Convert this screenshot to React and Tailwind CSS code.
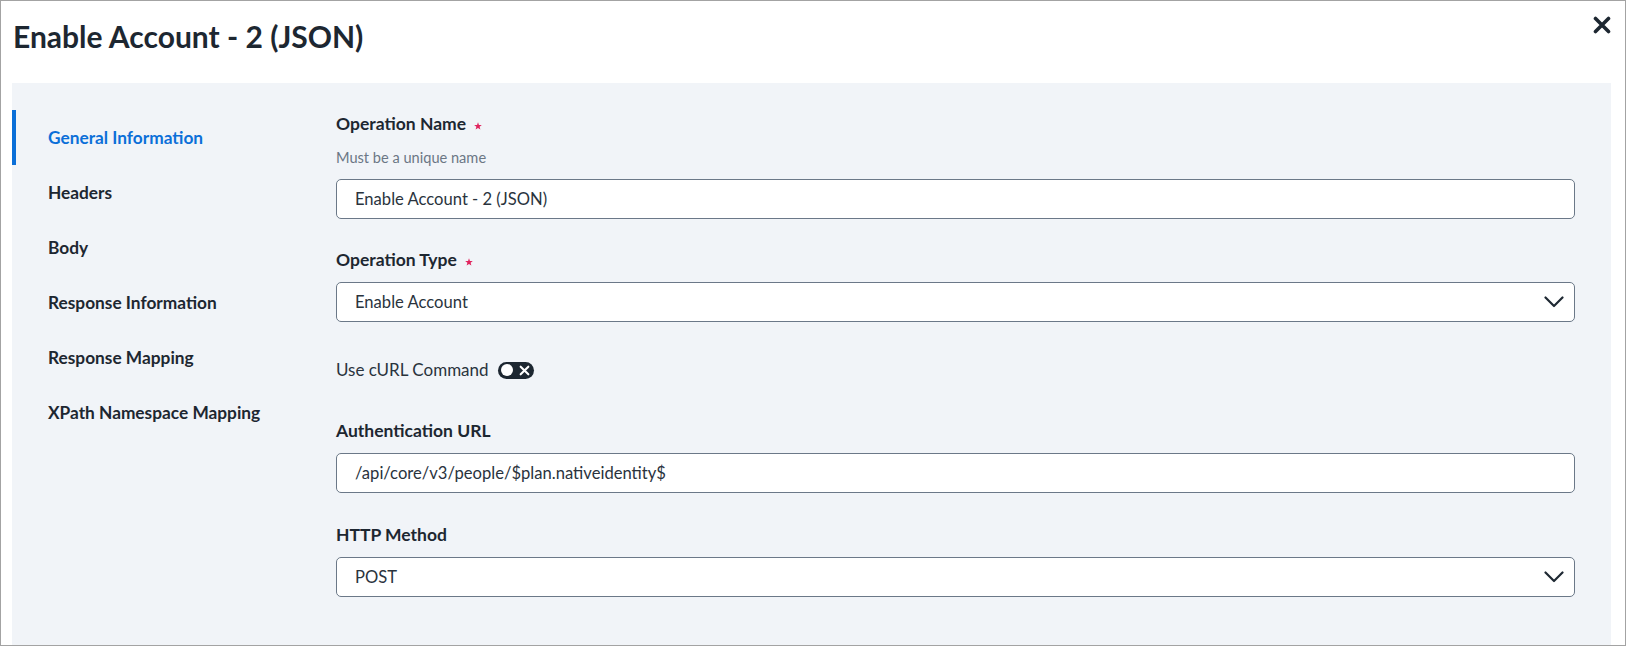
import React from 'react';

const FONT = { fontFamily: 'Lato, "Noto Sans", sans-serif' };

const navItems = [
  'General Information',
  'Headers',
  'Body',
  'Response Information',
  'Response Mapping',
  'XPath Namespace Mapping',
];

function Chevron() {
  return (
    <svg width="20" height="12" viewBox="0 0 20 12" fill="none">
      <polyline points="1.5,1.5 10,10 18.5,1.5" stroke="#1f2933" strokeWidth="2.2" strokeLinecap="round" strokeLinejoin="round" />
    </svg>
  );
}

function Star() {
  return (
    <svg width="8" height="8" viewBox="0 0 10 10" className="ml-[8px] mt-[3px]">
      <polygon points="5,0.3 6.2,3.6 9.8,3.7 7,5.9 8,9.5 5,7.4 2,9.5 3,5.9 0.2,3.7 3.8,3.6" fill="#e0245e" />
    </svg>
  );
}

function Label({ children, required }) {
  return (
    <div className="flex items-center h-6 text-[17.5px] font-bold text-[#1d2731]">
      {children}
      {required && <Star />}
    </div>
  );
}

function TextInput({ value }) {
  return (
    <div className="h-10 bg-white border border-[#6b7888] rounded-[5px] flex items-center px-[18px] text-[16.6px] text-[#2a333d]">
      {value}
    </div>
  );
}

function Select({ value }) {
  return (
    <div className="h-10 bg-white border border-[#6b7888] rounded-[5px] flex items-center justify-between pl-[18px] pr-[10px] text-[16.6px] text-[#2a333d]">
      <span>{value}</span>
      <Chevron />
    </div>
  );
}

export default function App() {
  const active = 0;
  return (
    <div className="w-[1626px] h-[646px] bg-white border border-[#a3a3a3] flex flex-col overflow-hidden" style={FONT}>
      <div className="h-[82px] shrink-0 flex items-start justify-between pl-3 pr-[14px]">
        <h1 className="mt-[17px] text-[30px] leading-[36px] font-bold text-[#1d2731]">Enable Account - 2 (JSON)</h1>
        <button className="mt-[15px]">
          <svg width="18" height="18" viewBox="0 0 18 18">
            <path d="M2.5 2.5 L15.5 15.5 M15.5 2.5 L2.5 15.5" stroke="#1d2731" strokeWidth="3.6" strokeLinecap="round" />
          </svg>
        </button>
      </div>

      <div className="flex-1 ml-[11px] mr-[14px] bg-[#f1f4f8] flex">
        <nav className="w-[324px] shrink-0 pt-[27px]">
          {navItems.map((item, i) => (
            <div
              key={item}
              className={`h-[55px] flex items-center border-l-4 pl-8 text-[17.3px] font-bold ${i === active ? 'border-[#0b6fd8] text-[#0b6fd8]' : 'border-transparent text-[#1d2731]'}`}
            >
              {item}
            </div>
          ))}
        </nav>

        <div className="flex-1 pr-9 pt-[29px]">
          <Label required>Operation Name</Label>
          <div className="mt-[12px] h-5 flex items-center text-[14.6px] text-[#6b7785]">Must be a unique name</div>
          <div className="mt-[11px]">
            <TextInput value="Enable Account - 2 (JSON)" />
          </div>

          <div className="mt-[29px]">
            <Label required>Operation Type</Label>
          </div>
          <div className="mt-[10px]">
            <Select value="Enable Account" />
          </div>

          <div className="mt-9 h-6 flex items-center text-[17px] text-[#2a333d]">
            Use cURL Command
            <span className="ml-[9px] w-[36px] h-[17px] rounded-full bg-[#1d2731] flex items-center justify-between pl-[3px] pr-[4px]">
              <span className="w-[12px] h-[12px] rounded-full bg-white" />
              <svg width="11" height="11" viewBox="0 0 10 10">
                <path d="M1.5 1.5 L8.5 8.5 M8.5 1.5 L1.5 8.5" stroke="white" strokeWidth="1.9" strokeLinecap="round" />
              </svg>
            </span>
          </div>

          <div className="mt-[37px]">
            <Label>Authentication URL</Label>
          </div>
          <div className="mt-[10px]">
            <TextInput value="/api/core/v3/people/$plan.nativeidentity$" />
          </div>

          <div className="mt-[30px]">
            <Label>HTTP Method</Label>
          </div>
          <div className="mt-[10px]">
            <Select value="POST" />
          </div>
        </div>
      </div>
    </div>
  );
}
